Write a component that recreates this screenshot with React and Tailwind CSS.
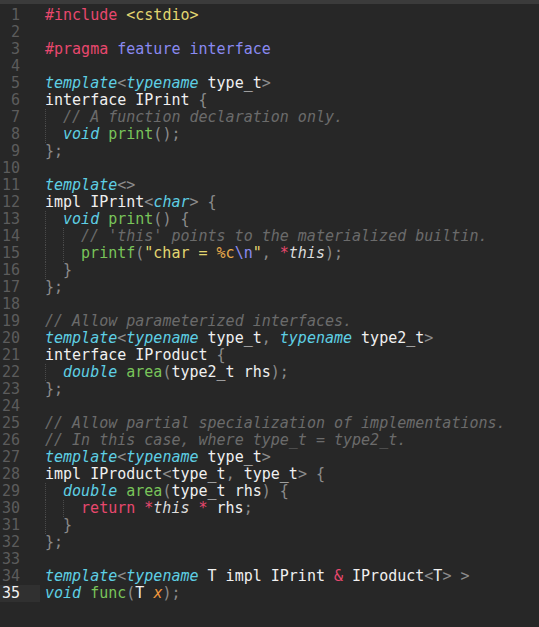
const C = {
  k: 'text-[#e8486e]',
  s: 'text-[#e2d670]',
  m: 'text-[#e8a94a]',
  p: 'text-[#8a8af0]',
  t: 'text-[#5ecfe4] italic',
  w: 'text-[#f0f0f0]',
  i: 'text-[#dcdcdc] italic',
  g: 'text-[#8c8c8c]',
  f: 'text-[#79c45a]',
  c: 'text-[#6b6b6b] italic',
  o: 'text-[#f0963c] italic',
};

// each line: [indent guides, tokens]
const LINES = [
  [0, [['k', '#include '], ['s', '<cstdio>']]],
  [0, []],
  [0, [['k', '#pragma '], ['p', 'feature interface']]],
  [0, []],
  [0, [['t', 'template'], ['g', '<'], ['t', 'typename'], ['w', ' type_t'], ['g', '>']]],
  [0, [['w', 'interface IPrint '], ['g', '{']]],
  [1, [['c', '// A function declaration only.']]],
  [1, [['t', 'void'], ['w', ' '], ['f', 'print'], ['g', '();']]],
  [0, [['g', '};']]],
  [0, []],
  [0, [['t', 'template'], ['g', '<>']]],
  [0, [['w', 'impl IPrint'], ['g', '<'], ['t', 'char'], ['g', '> {']]],
  [1, [['t', 'void'], ['w', ' '], ['f', 'print'], ['g', '() {']]],
  [2, [['c', "// 'this' points to the materialized builtin."]]],
  [2, [['f', 'printf'], ['g', '('], ['s', '"char = '], ['m', '%c'], ['p', '\\n'], ['s', '"'], ['g', ', '], ['k', '*'], ['i', 'this'], ['g', ');']]],
  [1, [['g', '}']]],
  [0, [['g', '};']]],
  [0, []],
  [0, [['c', '// Allow parameterized interfaces.']]],
  [0, [['t', 'template'], ['g', '<'], ['t', 'typename'], ['w', ' type_t'], ['g', ', '], ['t', 'typename'], ['w', ' type2_t'], ['g', '>']]],
  [0, [['w', 'interface IProduct '], ['g', '{']]],
  [1, [['t', 'double'], ['w', ' '], ['f', 'area'], ['g', '('], ['w', 'type2_t rhs'], ['g', ');']]],
  [0, [['g', '};']]],
  [0, []],
  [0, [['c', '// Allow partial specialization of implementations.']]],
  [0, [['c', '// In this case, where type_t = type2_t.']]],
  [0, [['t', 'template'], ['g', '<'], ['t', 'typename'], ['w', ' type_t'], ['g', '>']]],
  [0, [['w', 'impl IProduct'], ['g', '<'], ['w', 'type_t'], ['g', ', '], ['w', 'type_t'], ['g', '> {']]],
  [1, [['t', 'double'], ['w', ' '], ['f', 'area'], ['g', '('], ['w', 'type_t rhs'], ['g', ') {']]],
  [2, [['k', 'return *'], ['i', 'this'], ['k', ' * '], ['w', 'rhs'], ['g', ';']]],
  [1, [['g', '}']]],
  [0, [['g', '};']]],
  [0, []],
  [0, [['t', 'template'], ['g', '<'], ['t', 'typename'], ['w', ' T impl IPrint '], ['k', '&'], ['w', ' IProduct'], ['g', '<'], ['w', 'T'], ['g', '> >']]],
  [0, [['t', 'void'], ['w', ' '], ['f', 'func'], ['g', '('], ['w', 'T '], ['o', 'x'], ['g', ');']]],
];

const CURRENT = 35;

function Line({ n, indent, tokens }) {
  const active = n === CURRENT;
  return (
    <div className="flex h-[17px] items-center">
      <div
        className={`w-[40px] h-full shrink-0 pr-[20px] text-right ${
          active ? 'bg-[#303030] text-[#f2f2f2]' : 'text-[#5c5c5c]'
        }`}
      >
        {n}
      </div>
      <div className="pl-[5px] flex h-full items-center whitespace-pre">
        {Array.from({ length: indent }).map((_, j) => (
          <span key={j} className="w-[2ch] h-full border-l border-dotted border-[#4a4a4a]" />
        ))}
        {tokens.map(([type, text], j) => (
          <span key={j} className={C[type]}>
            {text}
          </span>
        ))}
      </div>
    </div>
  );
}

export default function App() {
  return (
    <div
      className="w-[539px] h-[627px] bg-[#272727] overflow-hidden text-[15px] leading-[17px]"
      style={{ fontFamily: '"DejaVu Sans Mono", monospace' }}
    >
      <div className="h-[4px] bg-[#3b3b3b]" />
      <div className="pt-[3px]">
        {LINES.map(([indent, tokens], i) => (
          <Line key={i} n={i + 1} indent={indent} tokens={tokens} />
        ))}
      </div>
    </div>
  );
}
